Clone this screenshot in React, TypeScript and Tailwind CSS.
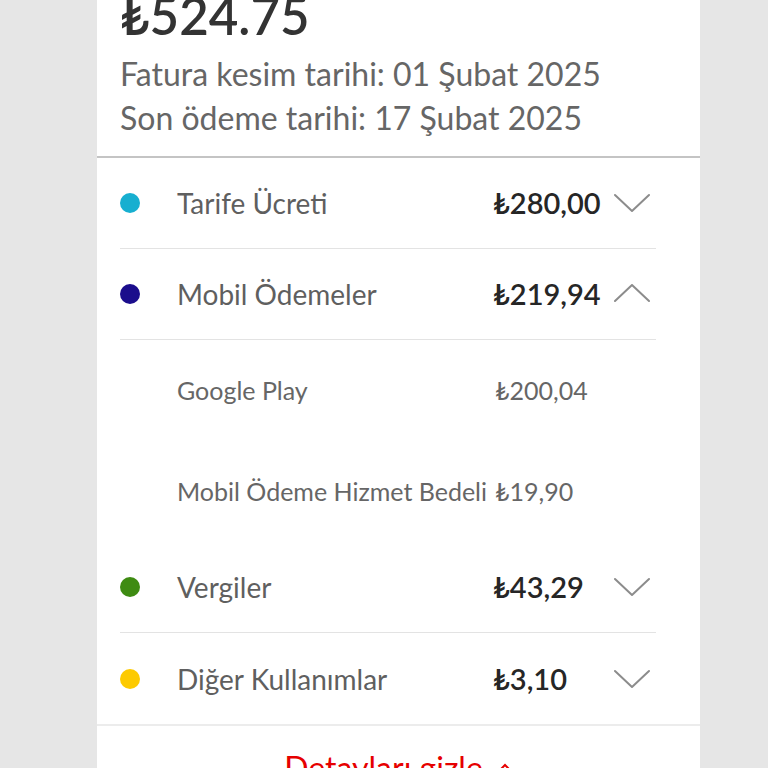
import React from 'react';

type Item = { label: string; amount: string };
type Group = { color: string; label: string; amount: string; open?: boolean; items?: Item[] };

const GROUPS: Group[] = [
  { color: 'bg-[#17afd0]', label: 'Tarife Ücreti', amount: '₺280,00' },
  {
    color: 'bg-[#1b0d8c]',
    label: 'Mobil Ödemeler',
    amount: '₺219,94',
    open: true,
    items: [
      { label: 'Google Play', amount: '₺200,04' },
      { label: 'Mobil Ödeme Hizmet Bedeli', amount: '₺19,90' },
    ],
  },
  { color: 'bg-[#3e8b12]', label: 'Vergiler', amount: '₺43,29' },
  { color: 'bg-[#fdca00]', label: 'Diğer Kullanımlar', amount: '₺3,10' },
];

const Chevron: React.FC<{ up?: boolean }> = ({ up }) => (
  <svg width="36" height="20" viewBox="0 0 36 20" fill="none" className="shrink-0">
    <path
      d={up ? 'M1 17 L18 1 L35 17' : 'M1 2 L18 18 L35 2'}
      stroke="#8c8c8c"
      strokeWidth="2"
      strokeLinecap="round"
      strokeLinejoin="round"
    />
  </svg>
);

const App: React.FC = () => {
  return (
    <div className="min-h-screen h-[768px] overflow-hidden bg-[#e6e6e6] font-['Lato','Noto_Sans',sans-serif]">
      <div className="ml-[97px] w-[603px] bg-white">
        {/* header */}
        <div className="pl-[23px] pb-[16px] border-b-2 border-[#c4c4c4]">
          <p className="-mt-[9px] text-[51px] leading-[50px] font-semibold text-[#333]">₺524.75</p>
          <p className="mt-[11px] text-[32px] leading-[44px] text-[#666]">Fatura kesim tarihi: 01 Şubat 2025</p>
          <p className="text-[32px] leading-[44px] text-[#666]">Son ödeme tarihi: 17 Şubat 2025</p>
        </div>

        {/* breakdown */}
        <div className="pl-[23px] pr-[44px]">
          {GROUPS.map((g, i) => (
            <div key={g.label}>
              <div
                className={`flex items-center h-[91px] ${
                  i < GROUPS.length - 1 ? 'border-b border-[#e3e3e3]' : ''
                }`}
              >
                <span className={`w-[20px] h-[20px] rounded-full ${g.color}`} />
                <span className="ml-[37px] flex-1 text-[28px] text-[#5f5f5f]">{g.label}</span>
                <span className="w-[121px] text-[29px] font-semibold text-[#262626]">{g.amount}</span>
                <Chevron up={g.open} />
                <span className="w-[6px]" />
              </div>
              {g.open && g.items && (
                <div>
                  {g.items.map((it) => (
                    <div key={it.label} className="flex items-center h-[101px] pl-[57px]">
                      <span className="w-[318px] text-[25px] text-[#666] whitespace-nowrap">{it.label}</span>
                      <span className="text-[25px] text-[#666]">{it.amount}</span>
                    </div>
                  ))}
                </div>
              )}
            </div>
          ))}
        </div>

        {/* footer */}
        <div className="border-t-2 border-[#ececec] flex items-center justify-center gap-[14px] pt-[18px] pb-[20px]">
          <span className="text-[32px] text-[#e60000]">Detayları gizle</span>
          <svg width="16" height="10" viewBox="0 0 16 10" fill="none">
            <path d="M1 9 L8 2 L15 9" stroke="#e60000" strokeWidth="2" />
          </svg>
        </div>
      </div>
    </div>
  );
};

export default App;
